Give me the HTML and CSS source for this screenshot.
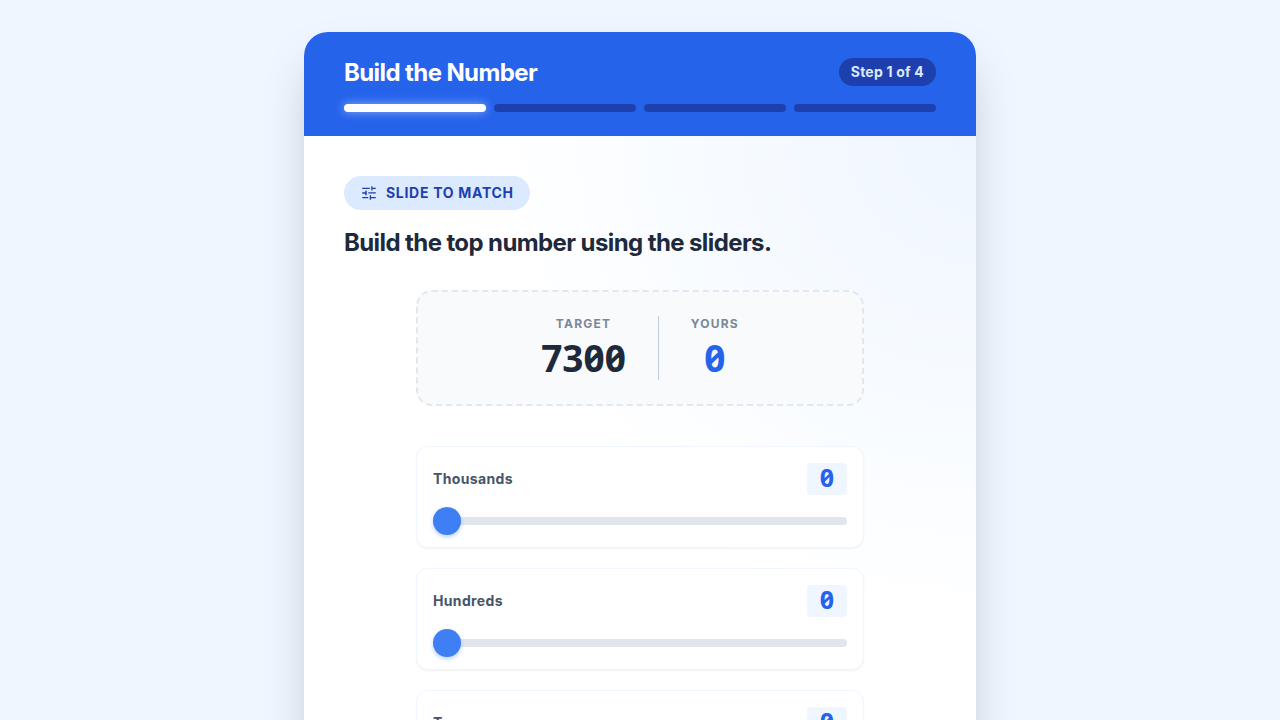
FILE: index.html
```
<!DOCTYPE html>
<html lang="en">
<head>
    <meta charset="utf-8">
    <meta name="viewport" content="width=device-width, initial-scale=1">
    <title>Build the Number</title>
    <link rel="stylesheet" href="styles.css">
</head>

<body>
    <main class="card">
        <header class="card-header">
            <div class="title-row">
                <h1>Build the Number</h1>
                <span class="step">Step 1 of 4</span>
            </div>
            <div class="progress">
                <span class="bar active"></span>
                <span class="bar"></span>
                <span class="bar"></span>
                <span class="bar"></span>
            </div>
        </header>

        <section class="card-body">
            <div class="tag">
                <svg class="tag-icon" viewBox="0 0 24 24" fill="currentColor" aria-hidden="true">
                    <path d="M3 5h10v1.7H3zM15 3h1.7v2H21v1.7h-4.3v2H15zM3 11h4V9h2v6H7v-2H3zM11 11h10v1.7H11zM3 17.3h8V19H3zM13 15h1.7v2.3H21V19h-6.3v2H13z"/>
                </svg>
                <span>SLIDE TO MATCH</span>
            </div>
            <h2>Build the top number using the sliders.</h2>

            <div class="builder">
                <div class="compare">
                    <div class="compare-item">
                        <span class="compare-label">TARGET</span>
                        <span class="compare-value">7300</span>
                    </div>
                    <div class="divider"></div>
                    <div class="compare-item">
                        <span class="compare-label">YOURS</span>
                        <span class="compare-value yours">0</span>
                    </div>
                </div>

                <div class="sliders">
                    <div class="slider-card">
                        <div class="slider-top">
                            <label for="thousands">Thousands</label>
                            <output for="thousands">0</output>
                        </div>
                        <input type="range" id="thousands" min="0" max="9" value="0">
                    </div>
                    <div class="slider-card">
                        <div class="slider-top">
                            <label for="hundreds">Hundreds</label>
                            <output for="hundreds">0</output>
                        </div>
                        <input type="range" id="hundreds" min="0" max="9" value="0">
                    </div>
                    <div class="slider-card">
                        <div class="slider-top">
                            <label for="tens">Tens</label>
                            <output for="tens">0</output>
                        </div>
                        <input type="range" id="tens" min="0" max="9" value="0">
                    </div>
                </div>
            </div>
        </section>
    </main>
</body>
</html>
```
FILE: styles.css
```
* {
    box-sizing: border-box;
}

body {
    margin: 0;
    padding: 32px 16px;
    background-color: #eff6ff;
    font-family: Inter, sans-serif;
    color: #1e293b;
}

.card {
    max-width: 672px;
    margin: 0 auto;
    background-color: #fff;
    border-radius: 24px;
    box-shadow: 0 25px 50px -12px rgba(0, 0, 0, 0.25);
}

/* header */
.card-header {
    padding: 24px 40px;
    background-color: #2563eb;
    border-radius: 24px 24px 0 0;
}

.title-row {
    display: flex;
    justify-content: space-between;
    align-items: center;
    margin-bottom: 16px;
}

h1, h2 {
    margin: 0;
    padding-top: 2px;
    font-size: 24px;
    line-height: 30px;
    font-weight: 700;
    letter-spacing: -0.025em;
}

h1 {
    color: #fff;
}

.step {
    padding: 4px 12px;
    border-radius: 14px;
    background-color: #1e40af;
    color: #dbeafe;
    font-size: 14px;
    line-height: 20px;
    font-weight: 700;
    letter-spacing: 0.015em;
}

.progress {
    display: flex;
    gap: 8px;
}

.bar {
    flex: 1;
    height: 8px;
    border-radius: 4px;
    background-color: #1e40af;
}

.bar.active {
    background-color: #fff;
    box-shadow: 0 0 10px rgba(255, 255, 255, 0.5);
}

/* body */
.card-body {
    padding: 40px;
    border-radius: 0 0 24px 24px;
    background-image: radial-gradient(circle at top right, #eff6ff, #f7fbff 260px, transparent 480px);
}

.tag {
    display: flex;
    align-items: center;
    gap: 8px;
    width: fit-content;
    margin-bottom: 16px;
    padding: 8px 16px;
    border-radius: 17px;
    background-color: #dbeafe;
    color: #1e40af;
    font-size: 14px;
    line-height: 18px;
    font-weight: 700;
    letter-spacing: 0.05em;
}

.tag-icon {
    width: 18px;
    height: 18px;
}

.builder {
    max-width: 448px;
    margin: 32px auto 0;
}

.compare {
    display: flex;
    justify-content: center;
    gap: 32px;
    margin-bottom: 40px;
    padding: 24px;
    border: 2px dashed #e2e8f0;
    border-radius: 16px;
    background-color: #f8fafc;
}

.compare-item {
    display: flex;
    flex-direction: column;
    align-items: center;
    gap: 8px;
}

.compare-label {
    color: #7b8798;
    font-size: 12px;
    line-height: 16px;
    font-weight: 700;
    letter-spacing: 0.1em;
}

.compare-value {
    padding-bottom: 4px;
    font-family: "Noto Sans", sans-serif;
    font-variant-numeric: tabular-nums slashed-zero;
    font-size: 37px;
    line-height: 36px;
    font-weight: 700;
}

.yours {
    color: #2563eb;
}

.divider {
    width: 1px;
    background-color: #c0cbdb;
}

.sliders {
    display: flex;
    flex-direction: column;
    gap: 20px;
}

.slider-card {
    display: flex;
    flex-direction: column;
    gap: 16px;
    padding: 16px;
    border: 1px solid #eff6ff;
    border-radius: 12px;
    background-color: #fff;
    box-shadow: 0 1px 2px rgba(0, 0, 0, 0.05);
}

.slider-top {
    display: flex;
    justify-content: space-between;
    align-items: center;
}

.slider-top label {
    color: #475569;
    font-size: 14px;
    line-height: 20px;
    font-weight: 700;
    letter-spacing: 0.025em;
}

.slider-top output {
    min-width: 40px;
    padding-bottom: 4px;
    border-radius: 4px;
    background-color: #eff6ff;
    color: #2563eb;
    font-family: "Noto Sans", sans-serif;
    font-variant-numeric: tabular-nums slashed-zero;
    font-size: 25px;
    line-height: 28px;
    font-weight: 700;
    text-align: center;
}

input[type="range"] {
    -webkit-appearance: none;
    appearance: none;
    width: 100%;
    height: 20px;
    margin: 0;
    background: transparent;
    cursor: pointer;
}

input[type="range"]::-webkit-slider-runnable-track {
    height: 8px;
    border-radius: 4px;
    background-color: #e1e6ee;
}

input[type="range"]::-webkit-slider-thumb {
    -webkit-appearance: none;
    width: 28px;
    height: 28px;
    margin-top: -10px;
    border-radius: 50%;
    background-color: #3f7ff4;
    box-shadow: 0 2px 4px rgba(37, 99, 235, 0.3);
}
```
